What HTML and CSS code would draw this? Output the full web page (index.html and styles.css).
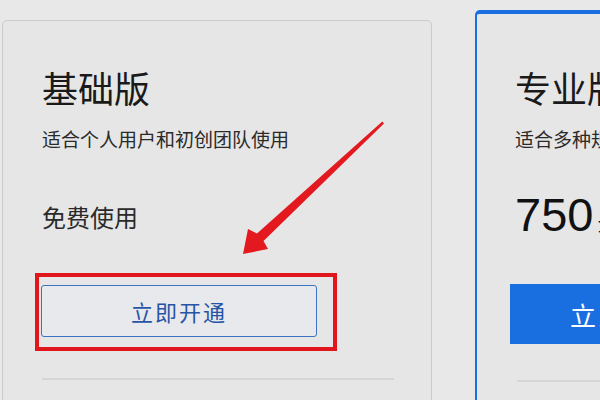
FILE: index.html
```html
<!DOCTYPE html>
<html lang="zh-CN">
<head>
<meta charset="utf-8">
<link rel="stylesheet" href="styles.css">
</head>
<body>
<div class="page">
  <div class="card basic">
    <h2 class="title">基础版</h2>
    <p class="desc">适合个人用户和初创团队使用</p>
    <p class="price-free">免费使用</p>
    <button class="btn-outline">立即开通</button>
    <hr class="divider">
  </div>
  <div class="card pro">
    <h2 class="title">专业版</h2>
    <p class="desc">适合多种规模团队使用</p>
    <p class="price"><span class="num">750</span><span class="unit">元/年</span></p>
    <button class="btn-solid">立即开通</button>
    <hr class="divider">
  </div>
</div>
<div class="highlight"></div>
<svg class="arrow" width="600" height="400" viewBox="0 0 600 400">
  <polygon points="382.3,121.6 257,233.5 248,229 243,254 268,249 263.5,241 384,123.6" fill="#e3191f"/>
</svg>
</body>
</html>
```

FILE: styles.css
```css
html, body {
  margin: 0;
  padding: 0;
  width: 600px;
  height: 400px;
  overflow: hidden;
  background: #e8e8e8;
  font-family: "Noto Sans CJK SC", "Noto Sans", sans-serif;
  position: relative;
}

.page {
  display: flex;
  align-items: flex-start;
  gap: 43px;
  padding-left: 2px;
}

.card {
  box-sizing: border-box;
  background: #e6e6e6;
  border-radius: 5px;
  flex-shrink: 0;
}

.basic {
  margin-top: 20px;
  width: 430px;
  height: 420px;
  border: 1px solid #cbcbcb;
  padding: 46px 38px 0 39px;
}

.pro {
  margin-top: 10px;
  width: 400px;
  height: 420px;
  border-top: 4px solid #1a6fe0;
  border-left: 2px solid #1a6fe0;
  padding: 53px 0 0 38px;
}

.title {
  margin: 0;
  font-size: 36px;
  line-height: 40px;
  font-weight: 400;
  color: #1a1a1a;
}

.desc {
  margin: 20px 0 0;
  font-size: 19px;
  line-height: 24px;
  color: #2a2a2a;
}

.price-free {
  margin: 51px 0 0;
  font-size: 24px;
  line-height: 30px;
  color: #2a2a2a;
}

.btn-outline {
  display: block;
  margin: 53px 0 0 -1px;
  width: 276px;
  height: 52px;
  box-sizing: border-box;
  border: 1.5px solid #3b72c2;
  border-radius: 3px;
  background: #e8e9ec;
  color: #2755a6;
  font-family: "Noto Sans CJK SC", sans-serif;
  font-size: 22px;
  letter-spacing: 2px;
  padding: 0;
}

.divider {
  margin: 41px 0 0 0;
  border: 0;
  border-top: 2px solid #d6d6d6;
  width: 352px;
}

.price {
  margin: 39px 0 0;
  line-height: 50px;
  color: #111;
  white-space: nowrap;
}

.price .num {
  font-family: "Liberation Sans", Arial, sans-serif;
  font-size: 47px;
}

.price .unit {
  font-size: 20px;
  margin-left: 4px;
}

.btn-solid {
  display: block;
  margin: 35px 0 0 -5px;
  width: 224px;
  height: 60px;
  border: 0;
  border-radius: 0;
  background: #1a6fe0;
  color: #fff;
  font-family: "Noto Sans CJK SC", sans-serif;
  font-size: 26px;
  letter-spacing: 2px;
  text-align: left;
  padding: 0 0 0 60px;
}

.pro .divider {
  margin-top: 36px;
  margin-left: 2px;
  width: 300px;
}

.highlight {
  position: absolute;
  left: 35px;
  top: 273px;
  width: 302px;
  height: 78px;
  box-sizing: border-box;
  border: 4px solid #e0161c;
}

.arrow {
  position: absolute;
  left: 0;
  top: 0;
}
```
